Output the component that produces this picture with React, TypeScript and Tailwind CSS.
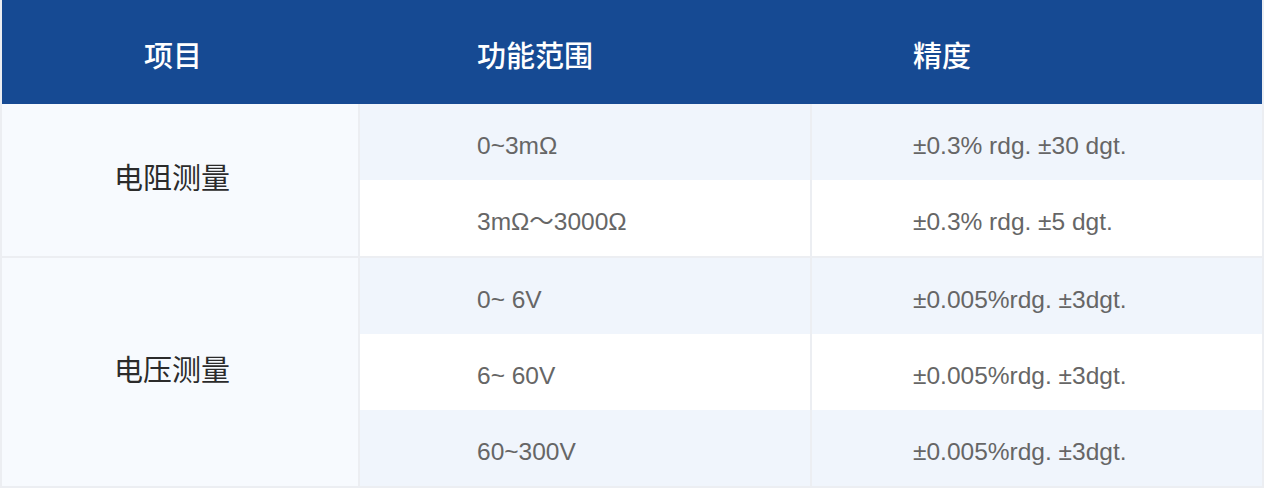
import React from 'react';

const font = { fontFamily: '"Liberation Sans", "Noto Sans CJK SC", sans-serif' };

interface Group {
    name: string;
    rows: { range: string; accuracy: string }[];
}

const groups: Group[] = [
    {
        name: '电阻测量',
        rows: [
            { range: '0~3mΩ', accuracy: '±0.3% rdg. ±30 dgt.' },
            { range: '3mΩ～3000Ω', accuracy: '±0.3% rdg. ±5 dgt.' },
        ],
    },
    {
        name: '电压测量',
        rows: [
            { range: '0~ 6V', accuracy: '±0.005%rdg. ±3dgt.' },
            { range: '6~ 60V', accuracy: '±0.005%rdg. ±3dgt.' },
            { range: '60~300V', accuracy: '±0.005%rdg. ±3dgt.' },
        ],
    },
];

export default function App() {
    return (
        <div className="w-[1264px] h-[489px] bg-white" style={font}>
            <div className="border-x-2 border-b-2 border-[#eceef2]">
                {/* Header */}
                <div className="flex h-[104px] bg-[#164a93] text-white text-[29px] font-medium">
                    <div className="w-[358px] flex items-center justify-center pt-3 pr-[16px]">项目</div>
                    <div className="w-[452px] flex items-center pt-3 pl-[117px]">功能范围</div>
                    <div className="flex-1 flex items-center pt-3 pl-[101px]">精度</div>
                </div>

                {/* Body */}
                {groups.map((group, gi) => (
                    <div key={group.name} className={`flex ${gi > 0 ? 'border-t-2 border-[#eceef2]' : ''}`}>
                        <div className="w-[356px] bg-[#f7fafe] flex items-center justify-center pr-[16px] text-[29px] text-[#2b2b2b]">
                            {group.name}
                        </div>
                        <div className="flex-1 flex flex-col border-l-2 border-[#eceef2]">
                            {group.rows.map((row, ri) => (
                                <div
                                    key={ri}
                                    className={`flex h-[76px] text-[24.5px] text-[#666666] ${ri % 2 === 0 ? 'bg-[#f0f5fc]' : 'bg-white'}`}
                                >
                                    <div className="w-[450px] flex items-center pt-2 pl-[117px]">{row.range}</div>
                                    <div className="flex-1 flex items-center pt-2 pl-[101px] border-l-2 border-[#eceef2]">
                                        {row.accuracy}
                                    </div>
                                </div>
                            ))}
                        </div>
                    </div>
                ))}
            </div>
        </div>
    );
}
